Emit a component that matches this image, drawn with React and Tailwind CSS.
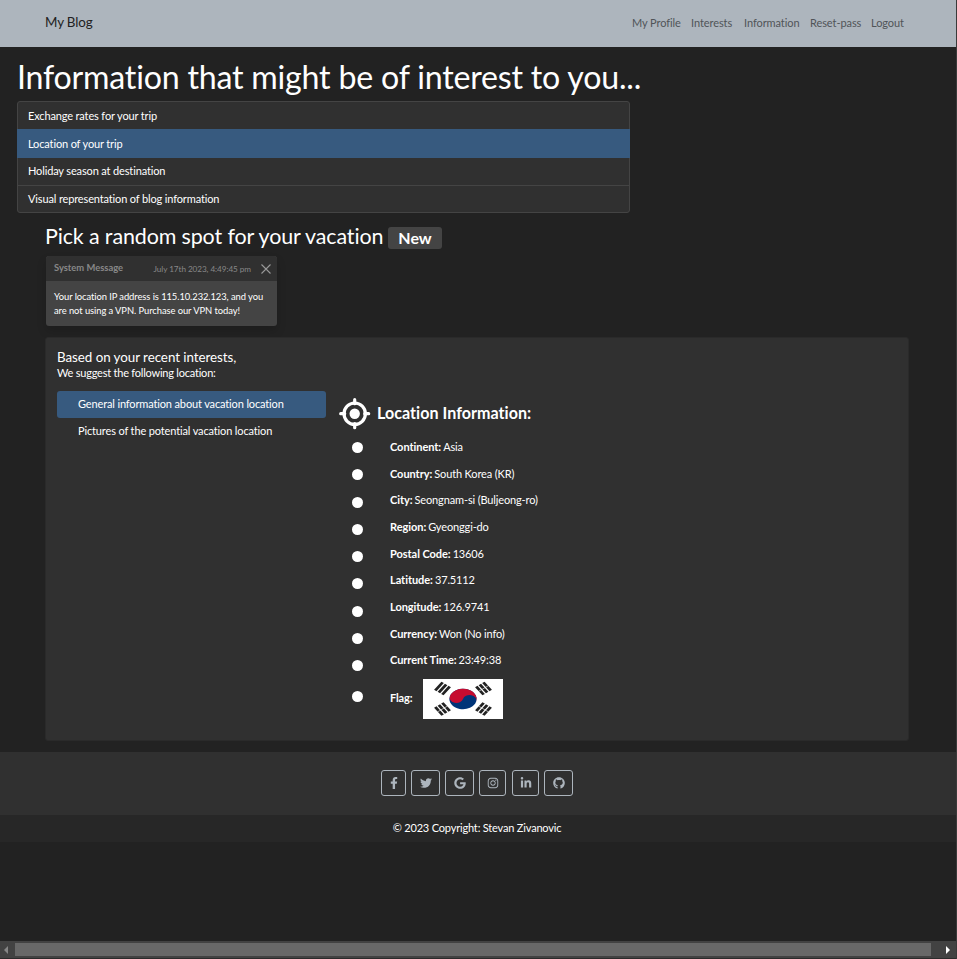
import { FaFacebookF, FaTwitter, FaGoogle, FaInstagram, FaLinkedinIn, FaGithub } from "react-icons/fa";

const navLinks = [
  ["My Profile", "w-[59px]"],
  ["Interests", "w-[53px]"],
  ["Information", "w-[66px]"],
  ["Reset-pass", "w-[61px]"],
  ["Logout", "w-[34px]"],
];

const details = [
  ["Continent:", "Asia"],
  ["Country:", "South Korea (KR)"],
  ["City:", "Seongnam-si (Buljeong-ro)"],
  ["Region:", "Gyeonggi-do"],
  ["Postal Code:", "13606"],
  ["Latitude:", "37.5112"],
  ["Longitude:", "126.9741"],
  ["Currency:", "Won (No info)"],
  ["Current Time:", "23:49:38"],
];

const socials = [
  [FaFacebookF, "w-[25px] mr-[5px]"],
  [FaTwitter, "w-[29px] mr-[5px]"],
  [FaGoogle, "w-[29px] mr-[5px]"],
  [FaInstagram, "w-[27px] mr-[6px]"],
  [FaLinkedinIn, "w-[27px] mr-[5px]"],
  [FaGithub, "w-[29px]"],
];

function Crosshair() {
  return (
    <svg className="block h-8 w-8" viewBox="0 0 32 32" fill="none" stroke="#fff">
      <circle cx="15.7" cy="15.7" r="10.7" strokeWidth="3.2" />
      <circle cx="15.7" cy="15.7" r="5.2" fill="#fff" stroke="none" />
      <path d="M15.7 1.7v4M15.7 25.7v4M1.7 15.7h4M25.7 15.7h4" strokeWidth="3.2" strokeLinecap="round" />
    </svg>
  );
}

function Trigram({ x, y, angle, split }) {
  return (
    <g transform={`translate(${x} ${y}) scale(1.25 1) rotate(${angle})`} stroke="#222" strokeWidth="2.4">
      <path d="M-5 -3.5H5M-5 0H5M-5 3.5H5" />
      {split && <path d="M0 -5V5" stroke="#fff" strokeWidth="0.5" />}
    </g>
  );
}

function Flag() {
  return (
    <svg className="block h-10 w-20" viewBox="0 0 80 40">
      <rect width="80" height="40" fill="#fff" />
      <g transform="translate(40 20) scale(1.33 1)">
        <g transform="rotate(14)">
          <circle r="10.2" fill="#003478" />
          <path d="M-10.2 0A10.2 10.2 0 0 1 10.2 0A5.1 5.1 0 0 0 0 0A5.1 5.1 0 0 1 -10.2 0Z" fill="#c60c30" />
        </g>
      </g>
      <Trigram x={19.5} y={9.5} angle={-54} />
      <Trigram x={60.5} y={9.5} angle={54} split />
      <Trigram x={19.5} y={30} angle={54} split />
      <Trigram x={60.5} y={30} angle={-54} split />
    </svg>
  );
}

export default function App() {
  return (
    <div className="flex h-[959px] w-[957px] flex-col overflow-hidden border-r border-[#3a3a3a] bg-[#222] font-['Lato',sans-serif] text-[11px] leading-4 tracking-[-0.14px] text-white">
      <nav className="flex h-[47px] shrink-0 items-center justify-between bg-[#adb5bd] pr-[51px] pl-[45px] whitespace-nowrap">
        <span className="pb-1 text-[13.4px] text-[#222]">My Blog</span>
        <div className="flex pb-[2px] tracking-[-0.08px] text-[#505458]">
          {navLinks.map(([label, width]) => (
            <a key={label} className={width}>{label}</a>
          ))}
        </div>
      </nav>

      <h1 className="mt-[10px] h-[44px] shrink-0 pl-[17px] text-[32.16px] leading-[40px] tracking-[-0.215px] whitespace-nowrap">
        Information that might be of interest to you...
      </h1>

      <div className="ml-[17px] flex h-[112px] w-[613px] shrink-0 flex-col rounded-[3px] border border-[#444] bg-[#303030]">
        <div className="flex h-[27px] items-center pl-[10px]">Exchange rates for your trip</div>
        <div className="-mx-px flex h-[29px] items-center bg-[#375a7f] pl-[11px]">Location of your trip</div>
        <div className="flex h-[28px] items-center border-b border-[#444] pb-[2px] pl-[10px]">Holiday season at destination</div>
        <div className="flex h-[26px] items-center pl-[10px]">Visual representation of blog information</div>
      </div>

      <div className="flex h-[43px] shrink-0 pt-[9px] pl-[45px]">
        <h3 className="w-[343px] text-[21.44px] leading-[28px] tracking-[-0.12px] whitespace-nowrap">Pick a random spot for your vacation</h3>
        <span className="mt-[5px] flex h-[22px] w-[54px] items-center justify-center rounded-[3px] bg-[#444] text-[16px] font-bold tracking-normal">New</span>
      </div>

      <div className="ml-[46px] h-[70px] w-[231px] shrink-0 rounded-[3px] bg-[#444] text-[9.38px] tracking-[-0.07px] shadow-[0_5px_10px_rgba(0,0,0,0.15)]">
        <div className="flex h-[25px] items-center rounded-t-[3px] bg-[#303030] pr-[6px] pl-2 text-[#888] whitespace-nowrap">
          <span className="mr-auto pb-[2px] font-bold tracking-normal">System Message</span>
          <span className="mr-[10px] text-[8.2px]">July 17th 2023, 4:49:45 pm</span>
          <svg className="h-[10px] w-[10px]" viewBox="0 0 10 10" stroke="#999" strokeWidth="1.1"><path d="M.5 .5l9 9M9.5 .5l-9 9" /></svg>
        </div>
        <p className="pt-[9px] pl-2 leading-[14px] whitespace-nowrap">
          Your location IP address is 115.10.232.123, and you<br />are not using a VPN. Purchase our VPN today!
        </p>
      </div>

      <main className="mt-[11px] ml-[45px] h-[404px] w-[864px] shrink-0 rounded-[3px] border border-[#2a2a2a] bg-[#303030] pt-3 pl-[11px]">
        <h5 className="h-[15px] text-[13.4px] leading-[15px] tracking-[-0.06px]">Based on your recent interests,</h5>
        <p className="h-[26px] tracking-[-0.22px]">We suggest the following location:</p>
        <div className="flex">
          <div className="w-[269px]">
            <div className="flex h-[27px] items-center rounded-[3px] bg-[#375a7f] pb-[2px] pl-[21px]">General information about vacation location</div>
            <div className="flex h-[27px] items-center pb-[2px] pl-[21px]">Pictures of the potential vacation location</div>
          </div>
          <div className="ml-[13px] pt-[7px]">
            <div className="flex h-[32px] items-center">
              <Crosshair />
              <h4 className="ml-[6px] pb-[2px] text-[16.08px] font-bold tracking-[0.03px]">Location Information:</h4>
            </div>
            <div className="flex">
              <div className="w-[51px] pt-[3.8px] pl-[13.4px]">
                {details.map(([label]) => (
                  <div key={label} className="flex h-[27.3px] items-center">
                    <span className="h-[11px] w-[11px] rounded-full bg-white" />
                  </div>
                ))}
                <div className="flex h-[34px] items-center"><span className="h-[11px] w-[11px] rounded-full bg-white" /></div>
              </div>
              <div className="pt-[3.6px]">
                {details.map(([label, value]) => (
                  <p key={label} className="flex h-[26.67px] items-center gap-[2px] whitespace-nowrap"><b className="tracking-[-0.05px]">{label}</b>{value}</p>
                ))}
                <div className="flex h-[50.8px] items-center">
                  <b className="w-[33px] pb-[2px]">Flag:</b>
                  <Flag />
                </div>
              </div>
            </div>
          </div>
        </div>
      </main>

      <footer className="mt-[11px] shrink-0">
        <div className="flex h-[63px] justify-center bg-[#303030] pt-[18px] pr-[2px]">
          {socials.map(([Icon, box], i) => (
            <a key={i} className={`flex h-[26px] items-center justify-center rounded-[3px] border border-[#adb5bd] text-[#adb5bd] ${box}`}><Icon size={12} /></a>
          ))}
        </div>
        <div className="flex h-[27px] items-center justify-center bg-[#272727] pr-[2px] pb-[2px] tracking-[-0.18px]">© 2023 Copyright: Stevan Zivanovic</div>
      </footer>

      <div className="mt-auto flex h-[18px] shrink-0 items-center border-b border-[#2b2b2b] bg-[#424242]">
        <div className="flex w-[15px] pl-1"><svg className="h-2 w-1" viewBox="0 0 4 8"><path d="M4 0v8L0 4z" fill="#868686" /></svg></div>
        <div className="h-[13px] w-[916px] bg-[#686868]" />
        <div className="flex pl-[15px]"><svg className="h-2 w-1" viewBox="0 0 4 8"><path d="M0 0v8l4-4z" fill="#fff" /></svg></div>
      </div>
    </div>
  );
}
